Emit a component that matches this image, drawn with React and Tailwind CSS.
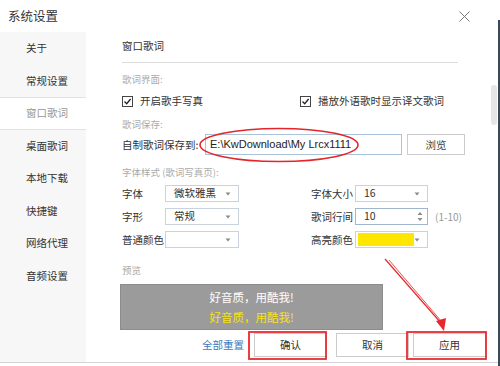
import React from "react";

const FONT = { fontFamily: '"Noto Sans CJK SC", "Noto Sans", "Liberation Sans", sans-serif' };

function Caret() {
  return (
    <svg width="6" height="4" viewBox="0 0 6 4" className="shrink-0">
      <path d="M0.5 0.5 L5.5 0.5 L3 3.5 Z" fill="#8a8a8a" />
    </svg>
  );
}

function Select({ value, w, yellow }) {
  return (
    <div className={`h-[17px] ${w} shrink-0 border border-[#c9d3dd] bg-white flex items-center pl-[8px] pr-[7px] justify-between`}>
      {yellow ? (
        <div className="h-[13px] w-[58px] -ml-[6px] bg-[#ffe600]" />
      ) : (
        <span className="text-[10.5px] text-[#333] leading-none">{value}</span>
      )}
      <Caret />
    </div>
  );
}

function Checkbox({ label }) {
  return (
    <div className="flex items-center gap-[7px]">
      <div className="w-[11px] h-[11px] border border-[#444] bg-white flex items-center justify-center">
        <svg width="9" height="9" viewBox="0 0 9 9">
          <path d="M1.5 4.5 L3.7 6.7 L7.6 2" stroke="#222" strokeWidth="1.3" fill="none" />
        </svg>
      </div>
      <span className="text-[10.5px] text-[#333] leading-none whitespace-nowrap">{label}</span>
    </div>
  );
}

const navItems = ["关于", "常规设置", "窗口歌词", "桌面歌词", "本地下载", "快捷键", "网络代理", "音频设置"];

function Label({ children, w }) {
  return <span className={`${w} shrink-0 whitespace-nowrap text-[10.5px] text-[#333]`}>{children}</span>;
}

export default function App() {
  return (
    <div className="w-[500px] h-[366px] bg-white relative overflow-hidden" style={FONT}>
      {/* title bar */}
      <div className="h-[32px] flex items-center justify-between pl-[8px] pr-[30px]">
        <span className="text-[12.5px] text-[#333]">系统设置</span>
        <svg width="11" height="11" viewBox="0 0 11 11">
          <path d="M0.5 0.5 L10.5 10.5 M10.5 0.5 L0.5 10.5" stroke="#777" strokeWidth="1" />
        </svg>
      </div>

      <div className="flex h-[331px] border-b border-[#d4d4d4]">
        {/* sidebar */}
        <div className="w-[86px] bg-[#f7f7f7] flex flex-col">
          {navItems.map((t) => {
            const active = t === "窗口歌词";
            return (
              <div
                key={t}
                className={`h-[32.5px] flex items-center pl-[26px] text-[10.5px] ${
                  active ? "bg-white text-[#999] border-y border-[#e2e2e2]" : "text-[#333]"
                }`}
              >
                {t}
              </div>
            );
          })}
        </div>

        {/* main */}
        <div className="flex-1 pl-[36px] pt-[7px] flex flex-col">
          <div className="text-[10.5px] text-[#333] leading-[14px]">窗口歌词</div>
          <div className="mt-[9px] w-[336px] h-px bg-[#dcdcdc]" />

          <div className="mt-[10px] text-[9.5px] text-[#aaa] leading-[12px]">歌词界面:</div>
          <div className="mt-[9px] flex h-[14px] items-center">
            <div className="w-[178px]">
              <Checkbox label="开启歌手写真" />
            </div>
            <Checkbox label="播放外语歌时显示译文歌词" />
          </div>

          <div className="mt-[10px] text-[9.5px] text-[#aaa] leading-[12px]">歌词保存:</div>
          <div className="mt-[4px] flex items-center h-[21px]">
            <Label w="w-[83px]">自制歌词保存到:</Label>
            <div
              className="w-[197px] h-[21px] shrink-0 border border-[#a9c3da] flex items-center pl-[4px] text-[11px] text-[#222] whitespace-nowrap overflow-hidden"
              style={{ fontFamily: '"Liberation Sans", Arial, sans-serif' }}
            >
              E:\KwDownload\My Lrcx1111
            </div>
            <div className="ml-[5px] w-[58px] h-[21px] shrink-0 border border-[#ccc] flex items-center justify-center text-[10.5px] text-[#444]">
              浏览
            </div>
          </div>

          <div className="mt-[11px] text-[9.5px] text-[#aaa] leading-[12px]">字体样式 (歌词写真页):</div>
          <div className="mt-[7px] flex flex-col gap-[6px]">
            <div className="flex items-center h-[17px]">
              <Label w="w-[43px]">字体</Label>
              <Select value="微软雅黑" w="w-[74px]" />
              <span className="w-[72px] shrink-0" />
              <Label w="w-[44px]">字体大小</Label>
              <Select value="16" w="w-[73px]" />
            </div>
            <div className="flex items-center h-[17px]">
              <Label w="w-[43px]">字形</Label>
              <Select value="常规" w="w-[74px]" />
              <span className="w-[72px] shrink-0" />
              <Label w="w-[44px]">歌词行间</Label>
              <div className="h-[17px] w-[73px] shrink-0 border border-[#9fb6cc] bg-white flex items-center pl-[8px] pr-[4px] justify-between">
                <span className="text-[10.5px] text-[#333] leading-none">10</span>
                <svg width="6" height="11" viewBox="0 0 6 11">
                  <path d="M0.5 4 L3 1 L5.5 4 Z M0.5 7 L3 10 L5.5 7 Z" fill="#8a8a8a" />
                </svg>
              </div>
              <span className="ml-[7px] text-[10px] text-[#999] whitespace-nowrap">(1-10)</span>
            </div>
            <div className="flex items-center h-[17px]">
              <Label w="w-[43px]">普通颜色</Label>
              <Select value="" w="w-[74px]" />
              <span className="w-[72px] shrink-0" />
              <Label w="w-[44px]">高亮颜色</Label>
              <Select yellow w="w-[73px]" />
            </div>
          </div>

          <div className="mt-[16px] text-[9.5px] text-[#aaa] leading-[12px]">预览</div>
          <div className="mt-[8px] -ml-[2px] w-[263px] h-[46px] bg-[#9b9b9b] border border-[#8c8c8c] flex flex-col items-center justify-center gap-[5px]">
            <span className="text-[11.5px] text-white leading-[15px]">好音质，用酷我!</span>
            <span className="text-[11.5px] text-[#f3e21a] leading-[15px]">好音质，用酷我!</span>
          </div>

          <div className="mt-[3px] flex items-center h-[24px]">
            <span className="ml-[80px] text-[10.5px] text-[#3b78c2] whitespace-nowrap">全部重置</span>
            <div className="ml-[10px] w-[73px] h-[24px] shrink-0 border border-[#ccc] flex items-center justify-center text-[10.5px] text-[#333]">确认</div>
            <div className="ml-[9px] w-[73px] h-[24px] shrink-0 border border-[#ccc] flex items-center justify-center text-[10.5px] text-[#333]">取消</div>
            <div className="ml-[4px] w-[73px] h-[24px] shrink-0 border border-[#ccc] flex items-center justify-center text-[10.5px] text-[#333]">应用</div>
          </div>
        </div>
      </div>

      {/* scrollbar */}
      <div className="absolute left-[491px] top-[85px] w-[6px] h-[40px] rounded-full bg-[#e6e6e6]" />
      {/* right dark edge */}
      <div className="absolute left-[498px] top-[20px] w-[2px] h-[346px] bg-[#3a4a5a]" />

      {/* annotations */}
      <svg className="absolute left-0 top-0 pointer-events-none" width="500" height="366">
        <ellipse cx="279" cy="145" rx="79" ry="16.5" fill="none" stroke="#e4262b" strokeWidth="1.6" />
        <rect x="249" y="332" width="77" height="27" fill="none" stroke="#ee2a2f" strokeWidth="1.8" />
        <rect x="407" y="332" width="79" height="27" fill="none" stroke="#ee2a2f" strokeWidth="1.8" />
        <line x1="385" y1="259" x2="441" y2="323" stroke="#e8262b" strokeWidth="1.2" />
        <line x1="389" y1="260" x2="442" y2="322" stroke="#e8262b" strokeWidth="0.8" />
        <path d="M444 331 L436 321 L446 318 Z" fill="#e8262b" />
      </svg>
    </div>
  );
}
